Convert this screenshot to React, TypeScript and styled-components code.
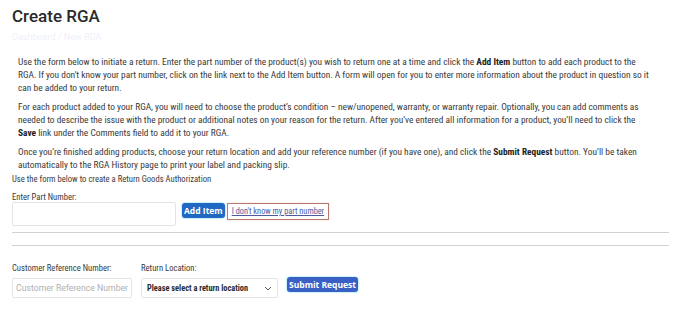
import styled, { createGlobalStyle } from "styled-components";

const GlobalStyle = createGlobalStyle`
  html, body {
    margin: 0;
    padding: 0;
    background: #fff;
  }
  body {
    font-family: Roboto, "Liberation Sans", sans-serif;
    color: #333;
  }
`;

const condensed = `"Roboto Condensed", "Liberation Sans Narrow", Roboto, sans-serif`;

const Page = styled.div`
  padding: 0 19px 0 12px;
`;

const Title = styled.h1`
  margin: 0;
  padding-top: 4px;
  font-family: Roboto, sans-serif;
  font-weight: 500;
  font-size: 17px;
  line-height: 24px;
  color: #2a2a2a;
`;

const Crumb = styled.div`
  margin-top: 3px;
  font-size: 9px;
  line-height: 12px;
  color: #eef0fb;
`;

const Intro = styled.div`
  padding: 12px 16px 0 6px;
`;

const Para = styled.p`
  margin: 0 0 6px;
  font-family: ${condensed};
  font-size: 9.4px;
  line-height: 13px;
  color: #3a3a3a;

  &:last-child {
    margin-bottom: 0;
  }

  b {
    font-weight: 700;
    color: #222;
  }
`;

const Note = styled.div`
  margin-top: 2px;
  font-family: ${condensed};
  font-size: 8.6px;
  line-height: 12px;
  color: #3a3a3a;
`;

const Label = styled.div`
  font-family: ${condensed};
  font-size: 8.6px;
  line-height: 12px;
  color: #3a3a3a;
`;

const PartLabel = styled(Label)`
  margin-top: 7px;
  line-height: 10px;
`;

const PartRow = styled.div`
  display: flex;
  align-items: flex-start;
`;

const TextInput = styled.input<{ $w: number; $h: number }>`
  box-sizing: border-box;
  width: ${({ $w }) => $w}px;
  height: ${({ $h }) => $h}px;
  margin: 0;
  padding: 0 3px;
  border: 1px solid #e4e4e4;
  border-radius: 2px;
  font-family: Roboto, sans-serif;
  font-size: 8.7px;
  color: #333;
  outline: none;

  &::placeholder {
    color: #b0b0b0;
  }
`;

const BlueButton = styled.button<{ $tone: string }>`
  box-sizing: border-box;
  height: 15px;
  margin: 0;
  padding: 0 2px;
  border: none;
  border-radius: 3px;
  background: ${({ $tone }) => $tone};
  box-shadow: 0 0 0 1px #c8f4fb;
  color: #fff;
  font-family: "Open Sans", Roboto, sans-serif;
  font-weight: 700;
  font-size: 8.5px;
  line-height: 15px;
  white-space: nowrap;
`;

const AddButton = styled(BlueButton)`
  margin: 1px 0 0 6px;
`;

const HelpLink = styled.a`
  display: block;
  box-sizing: border-box;
  height: 17px;
  margin: 1px 0 0 2px;
  padding: 0 4px;
  border: 1px solid #b8786c;
  box-shadow: 0 0 2px #f3d6e2;
  font-family: ${condensed};
  font-size: 8.3px;
  line-height: 15px;
  color: #4d5a9c;
  text-decoration: underline;
`;

const Divider = styled.hr`
  margin: 0;
  border: none;
  border-top: 1px solid #d2d2d2;
`;

const FirstDivider = styled(Divider)`
  margin-top: 6px;
`;

const SecondDivider = styled(Divider)`
  margin-top: 12px;
`;

const BottomRow = styled.div`
  display: flex;
  align-items: flex-end;
  gap: 9px;
  margin-top: 16px;
`;

const Field = styled.div`
  display: flex;
  flex-direction: column;
  gap: 4px;
`;

const SelectBox = styled.div`
  box-sizing: border-box;
  width: 137px;
  height: 20px;
  display: flex;
  align-items: center;
  justify-content: space-between;
  padding: 0 5px 0 5px;
  border: 1px solid #e4e4e4;
  border-radius: 2px;
  font-family: ${condensed};
  font-weight: 700;
  font-size: 8.3px;
  color: #2a2a2a;
`;

const SubmitButton = styled(BlueButton)`
  margin-bottom: 6px;
`;

export default function App() {
  return (
    <Page>
      <GlobalStyle />
      <Title>Create RGA</Title>
      <Crumb>Dashboard / New RGA</Crumb>
      <Intro>
        <Para>
          Use the form below to initiate a return. Enter the part number of the product(s) you wish
          to return one at a time and click the <b>Add Item</b> button to add each product to the
          RGA. If you don't know your part number, click on the link next to the Add Item button. A
          form will open for you to enter more information about the product in question so it can
          be added to your return.
        </Para>
        <Para>
          For each product added to your RGA, you will need to choose the product’s condition –
          new/unopened, warranty, or warranty repair. Optionally, you can add comments as needed to
          describe the issue with the product or additional notes on your reason for the return.
          After you’ve entered all information for a product, you’ll need to click the <b>Save</b>{" "}
          link under the Comments field to add it to your RGA.
        </Para>
        <Para>
          Once you’re finished adding products, choose your return location and add your reference
          number (if you have one), and click the <b>Submit Request</b> button. You’ll be taken
          automatically to the RGA History page to print your label and packing slip.
        </Para>
      </Intro>
      <Note>Use the form below to create a Return Goods Authorization</Note>
      <PartLabel>Enter Part Number:</PartLabel>
      <PartRow>
        <TextInput $w={164} $h={24} />
        <AddButton $tone="#2168c2">Add Item</AddButton>
        <HelpLink href="#">I don't know my part number</HelpLink>
      </PartRow>
      <FirstDivider />
      <SecondDivider />
      <BottomRow>
        <Field>
          <Label>Customer Reference Number:</Label>
          <TextInput $w={120} $h={20} placeholder="Customer Reference Number" />
        </Field>
        <Field>
          <Label>Return Location:</Label>
          <SelectBox>
            <span>Please select a return location</span>
            <svg width="8" height="5" viewBox="0 0 8 5" fill="none" stroke="#555" strokeWidth="1">
              <path d="M1 1l3 3 3-3" />
            </svg>
          </SelectBox>
        </Field>
        <SubmitButton $tone="#3a60c6">Submit Request</SubmitButton>
      </BottomRow>
    </Page>
  );
}
